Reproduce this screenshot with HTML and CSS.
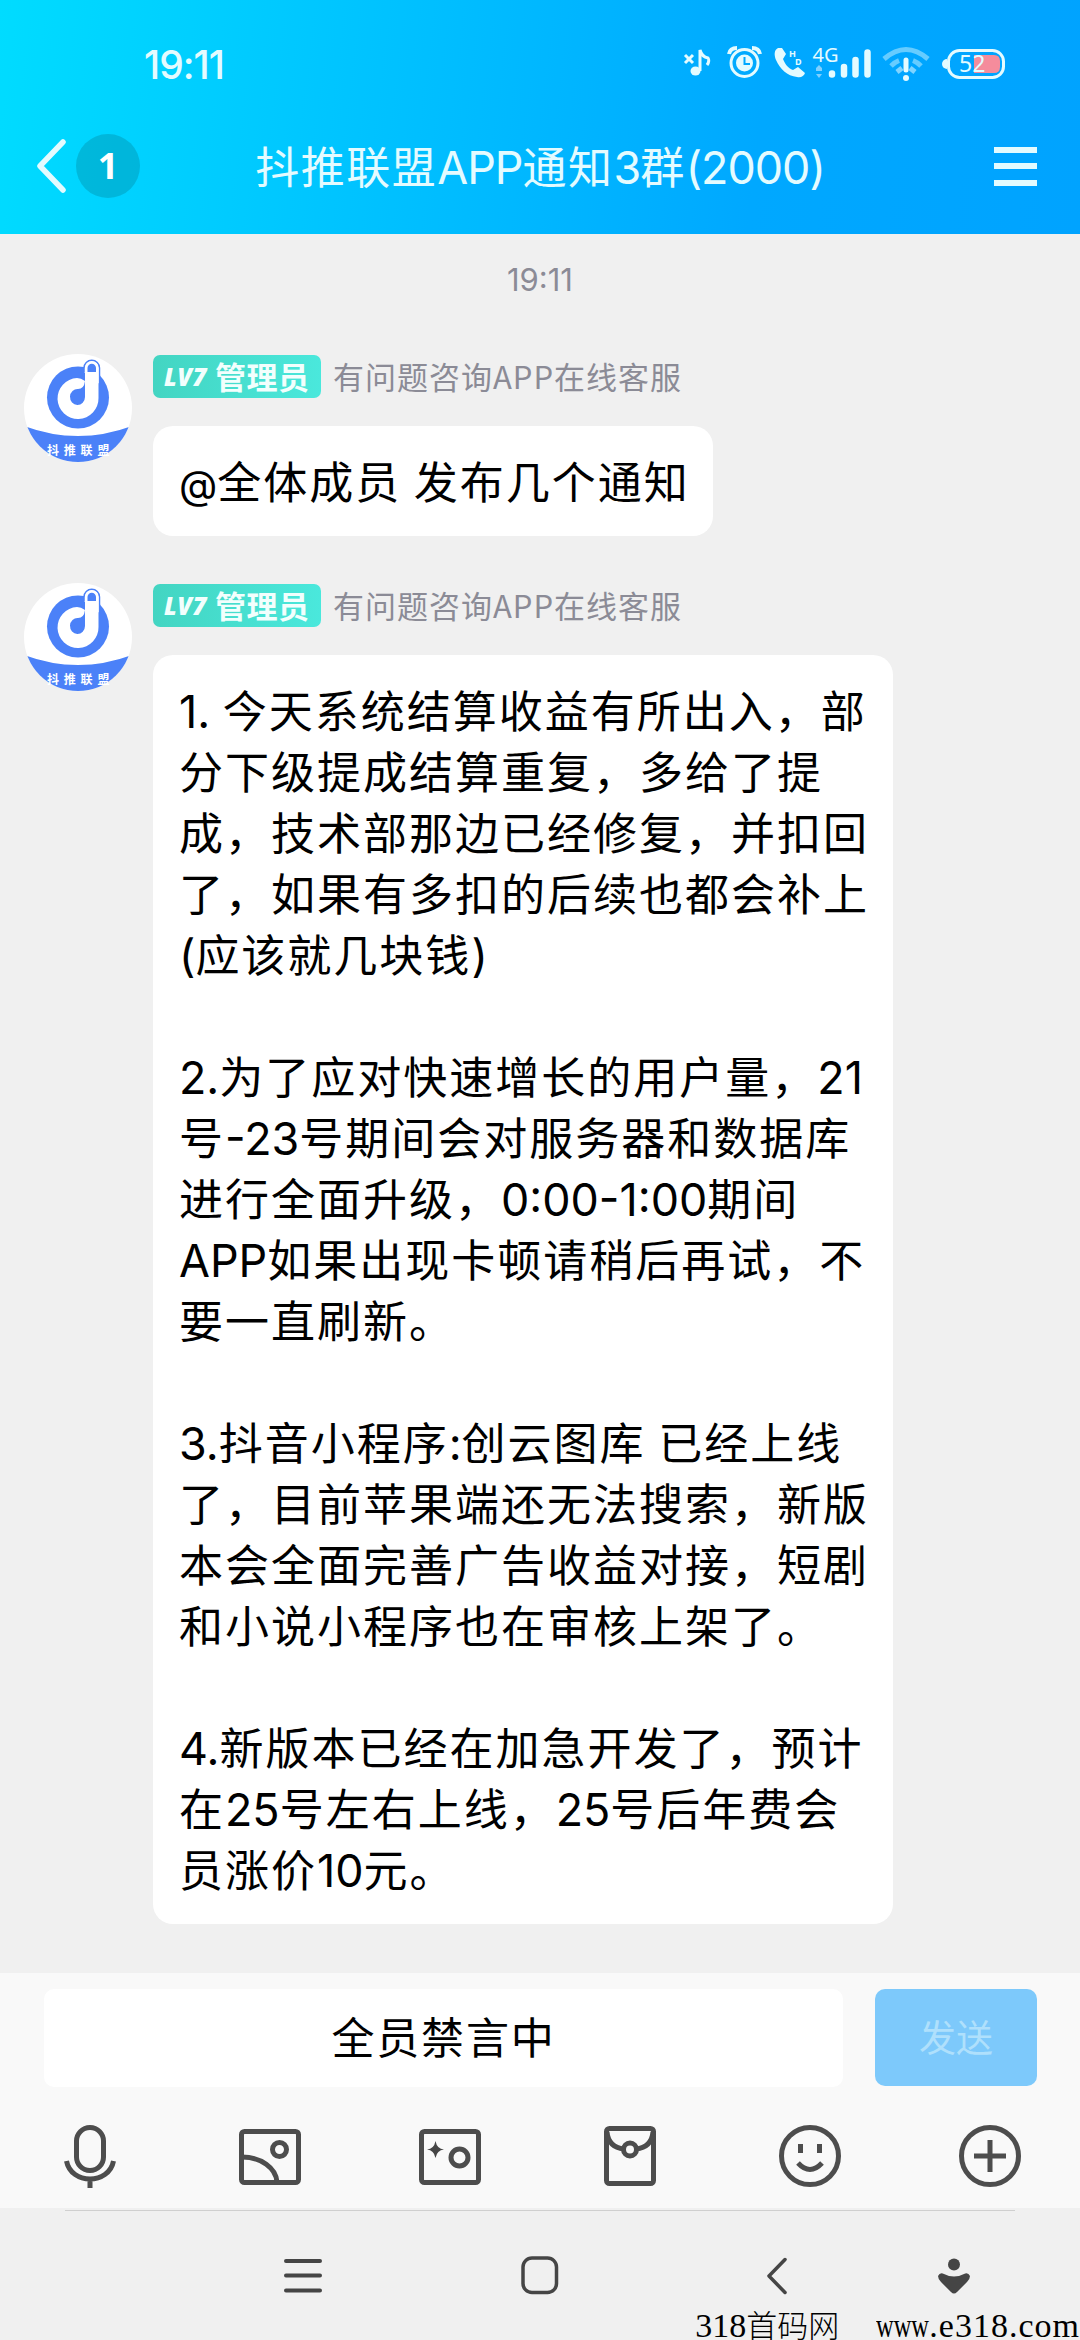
FILE: index.html
```html
<!DOCTYPE html>
<html lang="zh">
<head>
    <meta charset="UTF-8">
    <meta name="viewport" content="width=device-width, initial-scale=1.0">
    <title>抖推联盟APP通知3群</title>
    <link rel="stylesheet" href="styles.css">
</head>
<body>
    <svg class="defs">
        <symbol id="logo" viewBox="0 0 108 108">
            <clipPath id="round"><circle cx="54" cy="54" r="54"/></clipPath>
            <g clip-path="url(#round)">
                <rect width="108" height="108" fill="#fff"/>
                <path d="M0 72Q54 92 108 72V108H0Z" fill="#4b81f8"/>
                <circle cx="54" cy="43.500" r="31" fill="#4b81f8"/>
                <path d="M60 18V14A7.700 7.700 0 0 1 75.500 14V30" fill="#fff" stroke="#4b81f8" stroke-width="1.500"/>
                <path d="M61 12V27Q57 24 53 24A20.500 20.500 0 1 0 74.500 44V14A6.700 6.700 0 0 0 61 14Z" fill="#fff"/>
                <path d="M61 27V43A7.500 8 0 1 1 54 35Q60 35 61 27Z" fill="#4b81f8"/>
                <path d="M63.500 18V14A4.200 4.200 0 0 1 72 14V18Z" fill="#4b81f8"/>
            </g>
        </symbol>
    </svg>

    <div class="header">
        <div class="status-bar">
            <span class="clock">19:11</span>
            <svg class="status-icons" viewBox="0 0 330 44" fill="none" stroke="#e4fbff">
                <path d="M5 15L13 23M13 15L5 23" stroke-width="3"/>
                <ellipse cx="15.500" cy="31" rx="5" ry="4.500" fill="#e4fbff" stroke="none"/>
                <path d="M20 31V10Q22 17 28 18Q30 21 27 25" stroke-width="3"/>
                <circle cx="64.500" cy="23" r="13.500" stroke-width="3"/>
                <circle cx="64.500" cy="23" r="8.500" fill="#e4fbff" stroke="none"/>
                <path d="M64.500 17V24H70" stroke="#00a8ff" stroke-width="2"/>
                <path d="M49 14Q50 8 57 8M80 14Q79 8 72 8" stroke-width="4"/>
                <path d="M98 8C94 10 94 15 96 20C100 29 107 36 117 37C121 38 124 36 125 33L118 27L113 30C108 28 105 24 103 19L106 14L102 8Z" fill="#e4fbff" stroke="none"/>
                <text x="109" y="17" class="hd">H</text>
                <text x="115" y="25" class="hd">D</text>
                <text x="132.500" y="21.500" class="net">4G</text>
                <path d="M136 28L139 25L142 28V31H136ZM136 34H142L139 38Z" fill="#7fd0ff" stroke="none"/>
                <path d="M152 33.500V34.500M164 27V34.500M175.500 20V34.500M187.500 12.500V34.500" stroke-width="6.500" stroke-linecap="round"/>
                <path d="M204 19Q226 0 248 19" stroke="#66ccff" stroke-width="5"/>
                <path d="M211 26Q215 22 219 20.500M241 26Q237 22 233 20.500" stroke="#66ccff" stroke-width="5"/>
                <path d="M217 32L222 28M235 32L230 28" stroke="#80d4ff" stroke-width="5"/>
                <path d="M226 20V30" stroke-width="5" stroke-linecap="round"/>
                <circle cx="226" cy="38" r="3" fill="#e4fbff" stroke="none"/>
                <path d="M267 19A5 5 0 0 0 267 29Z" fill="#e4fbff" stroke="none"/>
                <rect x="268.500" y="10.500" width="55" height="27" rx="11" stroke-width="3"/>
                <path d="M294 15H314Q320 15 320 21V27Q320 33 314 33H294Z" fill="#f58c9c" stroke="none"/>
                <text x="279" y="32" class="power">52</text>
            </svg>
        </div>
        <div class="title-bar">
            <div class="back">
                <svg width="32" height="54" viewBox="0 0 32 54"><path d="M28 3L5 27L28 51" fill="none" stroke="#e4fbff" stroke-width="5.500" stroke-linecap="round" stroke-linejoin="round"/></svg>
                <span class="unread">1</span>
            </div>
            <h1>抖推联盟<span class="en">APP</span>通知<span class="en">3</span>群<span class="en">(2000)</span></h1>
            <div class="menu"><i></i><i></i><i></i></div>
        </div>
    </div>

    <div class="chat">
        <div class="time">19:11</div>
        <div class="message">
            <div class="avatar"><svg><use href="#logo"/></svg><span>抖推联盟</span></div>
            <div class="content">
                <div class="sender"><span class="badge"><em>LV7</em>管理员</span><span class="name">有问题咨询APP在线客服</span></div>
                <div class="bubble"><span class="en at">@</span>全体成员<span class="en"> </span>发布几个通知</div>
            </div>
        </div>
        <div class="message">
            <div class="avatar"><svg><use href="#logo"/></svg><span>抖推联盟</span></div>
            <div class="content">
                <div class="sender"><span class="badge"><em>LV7</em>管理员</span><span class="name">有问题咨询APP在线客服</span></div>
                <div class="bubble long">
                    <p><span class="en">1. </span>今天系统结算收益有所出入，部<br>分下级提成结算重复，多给了提<br>成，技术部那边已经修复，并扣回<br>了，如果有多扣的后续也都会补上<br><span class="en">(</span>应该就几块钱<span class="en">)</span></p>
                    <p><span class="en">2.</span>为了应对快速增长的用户量，<span class="en">21</span><br>号<span class="en">-23</span>号期间会对服务器和数据库<br>进行全面升级，<span class="en">0:00-1:00</span>期间<br><span class="en">APP</span>如果出现卡顿请稍后再试，不<br>要一直刷新。</p>
                    <p><span class="en">3.</span>抖音小程序<span class="en">:</span>创云图库<span class="en"> </span>已经上线<br>了，目前苹果端还无法搜索，新版<br>本会全面完善广告收益对接，短剧<br>和小说小程序也在审核上架了。</p>
                    <p><span class="en">4.</span>新版本已经在加急开发了，预计<br>在<span class="en">25</span>号左右上线，<span class="en">25</span>号后年费会<br>员涨价<span class="en">10</span>元。</p>
                </div>
            </div>
        </div>
    </div>

    <div class="composer">
        <div class="input-row">
            <div class="input">全员禁言中</div>
            <button class="send" disabled>发送</button>
        </div>
        <div class="tools">
            <svg viewBox="0 0 66 66"><rect x="19.500" y="4.500" width="27" height="43" rx="13.500"/><path d="M9.500 38C14 62 52 62 56.500 38M33 56V65"/></svg>
            <svg viewBox="0 0 66 66"><rect x="4.500" y="8.500" width="57" height="51" rx="3"/><circle cx="42.500" cy="26.500" r="7"/><path d="M5 34C24 34 39 45 40 59"/></svg>
            <svg viewBox="0 0 66 66"><rect x="4.500" y="8.500" width="57" height="51" rx="3"/><circle cx="42.500" cy="34.500" r="8.500"/><path class="solid" d="M18.500 18Q20 26 27 26.500Q20 27 18.500 35Q17 27 10 26.500Q17 26 18.500 18Z"/></svg>
            <svg viewBox="0 0 66 66"><rect x="9.500" y="5.500" width="47" height="55" rx="3"/><circle cx="33" cy="26.500" r="6.500"/><path d="M10 9C11 20 18 25 27 26M56 9C55 20 48 25 39 26"/></svg>
            <svg viewBox="0 0 66 66"><circle cx="33" cy="33" r="28.500"/><path d="M23.500 21V30M42.500 21V30M21 40Q33 53 45 40"/></svg>
            <svg viewBox="0 0 66 66"><circle cx="33" cy="33" r="28.500"/><path d="M17 33H49M33 17V49"/></svg>
        </div>
    </div>

    <div class="nav-bar">
        <svg viewBox="0 0 1080 80">
            <path d="M286 10H320M286 24.500H320M286 39.500H320" stroke-width="4"/>
            <rect x="523" y="7" width="33.500" height="34.500" rx="9" stroke-width="3.500"/>
            <path d="M785 8.500L769 25L785 41.500" stroke-width="3.500"/>
            <path class="solid" d="M938 25Q940 21 944 23Q954 28 964 23Q968 21 970 25Q970 28 967 31L957 41Q954 44 951 41L941 31Q938 28 938 25Z"/>
            <circle class="solid" cx="954" cy="13.500" r="6"/>
        </svg>
        <div class="watermark"><span>318<small>首码网</small></span><span class="site"><b>www</b>.e318.com</span></div>
    </div>
</body>
</html>
```

FILE: styles.css
```css
* {
    margin: 0;
    padding: 0;
    box-sizing: border-box;
}

body {
    width: 1080px;
    height: 2340px;
    font-family: 'Noto Sans CJK SC', sans-serif;
    background: #f0f0f0;
    color: #000;
    display: flex;
    flex-direction: column;
    overflow: hidden;
}

.defs {
    position: absolute;
    width: 0;
    height: 0;
}

/* 英文和数字 */
.en {
    font-family: 'Inter', sans-serif;
    font-size: 1.02em;
    line-height: 1;
    letter-spacing: 0;
    white-space: pre;
}

.at {
    font-size: 0.9em;
}

/* 顶部 */
.header {
    height: 234px;
    background: linear-gradient(97deg, #00dcff 0%, #00c2ff 35%, #00a8ff 70%, #00a3ff 100%);
    color: #e4fbff;
}

.status-bar {
    height: 98px;
    padding: 31px 70px 0 144px;
    display: flex;
    justify-content: space-between;
}

.clock {
    font: 500 39px/68px 'Inter', sans-serif;
    letter-spacing: -1px;
}

.status-icons {
    width: 330px;
    height: 44px;
    margin-top: 9px;
}

.status-icons text {
    stroke: none;
    fill: #e4fbff;
    font-family: 'Noto Sans', sans-serif;
}

.status-icons .hd {
    font-size: 9px;
    font-weight: bold;
}

.status-icons .net {
    font-size: 20px;
}

.status-icons .power {
    font-size: 23px;
}

.title-bar {
    height: 136px;
    padding: 0 43px 0 35px;
    display: grid;
    grid-template-columns: 180px 1fr 180px;
    align-items: center;
}

.back {
    display: flex;
    align-items: center;
    gap: 9px;
}

.unread {
    width: 64px;
    height: 64px;
    border-radius: 50%;
    background: rgba(0, 80, 90, 0.22);
    text-align: center;
    font: bold 36px/64px 'Noto Sans', sans-serif;
    color: #fff;
}

h1 {
    padding: 0 0 3px 8px;
    font-size: 44px;
    font-weight: normal;
    letter-spacing: 1.5px;
    text-align: center;
    white-space: nowrap;
}

h1 .en {
    letter-spacing: -1px;
}

.menu {
    justify-self: end;
    width: 43px;
    display: grid;
    gap: 10.5px;
}

.menu i {
    height: 6px;
    background: #e4fbff;
}

/* 聊天记录 */
.chat {
    height: 1739px;
    padding: 26px 24px 0;
}

.time {
    height: 40px;
    line-height: 40px;
    margin-bottom: 54px;
    text-align: center;
    font-family: 'Inter', sans-serif;
    font-size: 31px;
    letter-spacing: 0;
    color: #8b8b96;
}

.message {
    display: flex;
    gap: 21px;
    margin-bottom: 47px;
}

.avatar {
    position: relative;
    width: 108px;
    height: 108px;
}

.avatar svg {
    width: 108px;
    height: 108px;
}

.avatar span {
    position: absolute;
    left: 23px;
    top: 88px;
    font-size: 12px;
    line-height: 16px;
    font-weight: bold;
    letter-spacing: 4.800px;
    color: #fff;
    white-space: nowrap;
}

.content {
    padding-top: 1px;
}

.sender {
    display: flex;
    align-items: center;
    gap: 12px;
    height: 43px;
    margin-bottom: 28px;
}

.badge {
    width: 168px;
    height: 43px;
    padding-left: 11px;
    border-radius: 7px;
    background: linear-gradient(90deg, #43d5c2, #4ae8dc);
    color: #f2fffd;
    font-size: 31px;
    line-height: 41px;
    font-weight: bold;
    letter-spacing: 0.5px;
    display: flex;
    gap: 9px;
    white-space: nowrap;
}

.badge em {
    width: 42px;
    font: italic 800 24px/43px 'Open Sans', sans-serif;
}

.name {
    padding-bottom: 3px;
    font-size: 31px;
    letter-spacing: 1px;
    color: #8b8b96;
}

.bubble {
    width: 560px;
    padding: 24px 26px 25px;
    border-radius: 20px;
    background: #fff;
    font-size: 44px;
    line-height: 61px;
    letter-spacing: 2px;
    white-space: nowrap;
}

.long {
    width: 740px;
}

.bubble p + p {
    margin-top: 61px;
}

/* 输入区 */
.composer {
    height: 235px;
    padding: 16px 0 0;
    background: #f9f9f9;
}

.input-row {
    display: flex;
    justify-content: space-between;
    padding: 0 43px 0 44px;
}

.input {
    width: 799px;
    height: 98px;
    border-radius: 10px;
    background: #fff;
    font-size: 43px;
    line-height: 93px;
    letter-spacing: 1.800px;
    text-align: center;
}

.send {
    width: 162px;
    height: 97px;
    padding-bottom: 2px;
    border: none;
    border-radius: 10px;
    background: #7dc9fb;
    color: #afe0fc;
    font: 37px/95px 'Noto Sans CJK SC', sans-serif;
}

.tools {
    height: 138px;
    display: grid;
    grid-template-columns: repeat(6, 180px);
    align-items: center;
    justify-items: center;
}

.tools svg {
    width: 66px;
    height: 66px;
    fill: none;
    stroke: #4d4d4d;
    stroke-width: 5;
}

.tools .solid,
.nav-bar .solid {
    fill: #454545;
    stroke: none;
}

/* 系统导航 */
.nav-bar {
    position: relative;
    height: 132px;
    padding-top: 40px;
}

.nav-bar::before {
    content: '';
    position: absolute;
    left: 65px;
    right: 65px;
    top: 2px;
    height: 1px;
    background: #cfcfcf;
}

.nav-bar svg {
    display: block;
    margin-top: 3px;
    width: 1080px;
    height: 80px;
    fill: none;
    stroke: #454545;
    stroke-linecap: round;
    stroke-linejoin: round;
}

.watermark {
    position: absolute;
    right: 0;
    bottom: -5px;
    display: flex;
    gap: 37px;
    font: 34px/36px 'Liberation Serif', 'Noto Sans CJK SC', serif;
    white-space: nowrap;
}

.watermark small {
    font-size: 31px;
    font-weight: 300;
}

.site {
    letter-spacing: 1px;
}

.watermark b {
    display: inline-block;
    width: 53px;
    font-weight: normal;
    letter-spacing: 0;
    transform: scaleX(0.72);
    transform-origin: left;
}
```
